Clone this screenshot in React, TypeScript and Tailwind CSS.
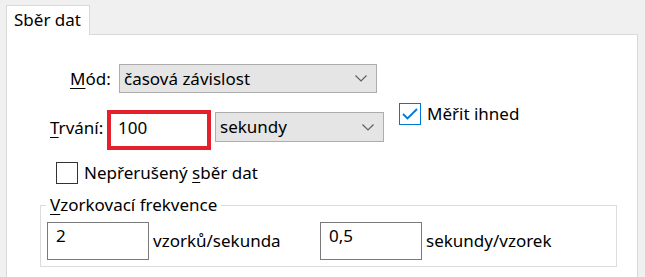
import { ReactNode } from "react";

const Chevron = () => (
  <svg width="12" height="7" viewBox="0 0 12 7" fill="none" stroke="#606060" strokeWidth="1.2">
    <path d="M0.5 0.5 L6 6 L11.5 0.5" />
  </svg>
);

const Select = ({ value, className }: { value: string; className: string }) => (
  <div className={`flex items-center justify-between bg-[#e5e5e5] border border-[#adadad] pl-[4px] pr-[9px] ${className}`}>
    <span>{value}</span>
    <Chevron />
  </div>
);

const Checkbox = ({ checked }: { checked?: boolean }) => (
  <div
    className={`w-[22px] h-[22px] shrink-0 flex items-center justify-center bg-white border ${
      checked ? "border-[#0078d7]" : "border-[#333333]"
    }`}
  >
    {checked && (
      <svg width="16" height="12" viewBox="0 0 16 12" fill="none" stroke="#0078d7" strokeWidth="1.8">
        <path d="M1 6 L5.5 10.5 L15 1" />
      </svg>
    )}
  </div>
);

const Key = ({ children }: { children: ReactNode }) => (
  <span className="underline underline-offset-[3px] decoration-1">{children}</span>
);

export default function App() {
  return (
    <div className="w-[645px] h-[277px] overflow-hidden bg-[#f0f0f0] pl-[6px] pr-[7px] pt-[5px] text-[17px] leading-[22px] text-black font-['Noto_Sans',sans-serif]">
      {/* tab strip */}
      <div className="flex">
        <div className="relative z-10 -mb-px w-[84px] h-[30px] bg-white border border-b-0 border-[#d9d9d9] pl-[7px] pt-[3px]">
          Sběr dat
        </div>
      </div>

      {/* tab page */}
      <div className="h-[300px] bg-white border border-[#d9d9d9] pt-[29px]">
        {/* Mód */}
        <div className="flex items-center pl-[63px]">
          <span className="w-[49px]">
            <Key>M</Key>ód:
          </span>
          <Select value="časová závislost" className="w-[258px] h-[29px]" />
        </div>

        {/* Trvání */}
        <div className="flex items-start pl-[43px] mt-[17px]">
          <span className="w-[57px] mt-[7px]">
            <Key>T</Key>rvání:
          </span>
          <div className="w-[104px] h-[40px] border-[4px] border-[#e3202b] pl-[7px] pt-[3px]">100</div>
          <Select value="sekundy" className="ml-[4px] mt-[2px] w-[169px] h-[30px]" />
          <div className="flex items-center ml-[15px] -mt-[7px]">
            <Checkbox checked />
            <span className="ml-[6px]">Měřit ihned</span>
          </div>
        </div>

        {/* Nepřerušený */}
        <div className="flex items-center pl-[49px] mt-[12px]">
          <Checkbox />
          <span className="ml-[6px]">
            Nepřerušený <Key>s</Key>běr dat
          </span>
        </div>

        {/* Vzorkovací frekvence */}
        <fieldset className="ml-[33px] mt-[10px] w-[577px] border border-[#dcdcdc] pb-[6px]">
          <legend className="ml-[5px] px-[4px]">
            <Key>V</Key>zorkovací frekvence
          </legend>
          <div className="flex items-center mt-[6px] pl-[6px]">
            <div className="w-[102px] h-[38px] border border-[#7a7a7a] pl-[8px] pt-[2px]">2</div>
            <span className="w-[171px] pl-[4px]">vzorků/sekunda</span>
            <div className="w-[102px] h-[38px] border border-[#7a7a7a] pl-[8px] pt-[2px]">0,5</div>
            <span className="pl-[4px]">sekundy/vzorek</span>
          </div>
        </fieldset>
      </div>
    </div>
  );
}
